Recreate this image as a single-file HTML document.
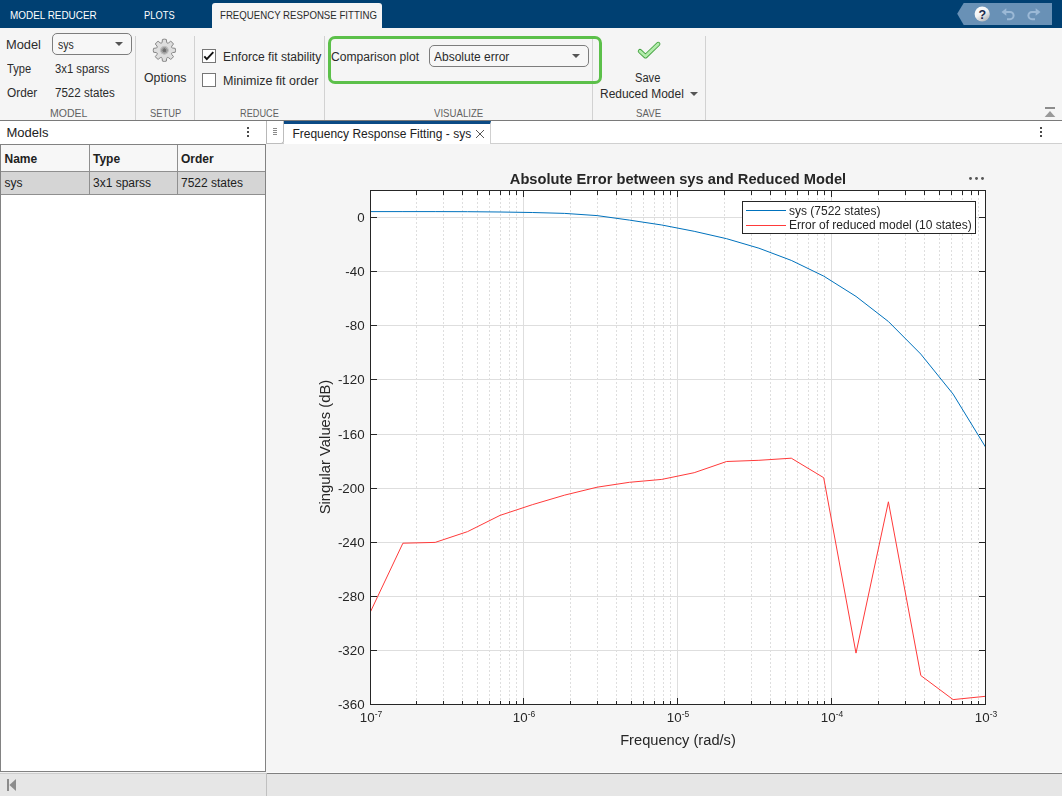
<!DOCTYPE html>
<html lang="en">
<head>
<meta charset="utf-8">
<title>Model Reducer - Frequency Response Fitting</title>
<style>
html,body{margin:0;padding:0;}
body{width:1062px;height:796px;overflow:hidden;background:#f5f5f5;font-family:"Liberation Sans",sans-serif;font-size:12px;color:#212121;position:relative;}
.abs{position:absolute;white-space:nowrap;}
#topbar{left:0;top:0;width:1062px;height:28px;background:#004072;}
.tab{color:#fff;font-size:11.5px;top:8px;line-height:14px;}
#acttab{left:212px;top:3px;width:170px;height:25px;background:#f5f5f5;border-radius:3px 3px 0 0;}
#strip{left:0;top:28px;width:1062px;height:92px;background:#f5f5f5;border-bottom:1px solid #7a7a7a;}
.sep{width:1px;top:36px;height:84px;background:#d2d2d2;}
.seclbl{top:106px;font-size:11px;line-height:14px;color:#616161;text-align:center;}
.t{font-size:12px;line-height:16px;color:#212121;}
.dd{border:1px solid #7d7d7d;border-radius:5px;background:#f7f7f7;box-sizing:border-box;}
.caret{width:0;height:0;border-left:4px solid transparent;border-right:4px solid transparent;border-top:4px solid #555;}
.th{font-size:12px;font-weight:bold;line-height:17px;color:#212121;}
.td{font-size:12px;line-height:17px;color:#212121;}
.x{line-height:16px;transform-origin:0 0;}
.cb{width:14px;height:14px;border:1px solid #767676;background:#fff;box-sizing:border-box;}
</style>
</head>
<body>
<!-- top bar -->
<div class="abs" id="topbar"></div>
<div class="abs" id="acttab"></div>
<!-- quick access -->
<svg class="abs" style="left:950px;top:0" width="112" height="28" viewBox="950 0 112 28">
<defs><linearGradient id="hg" x1="0" y1="0" x2="0.6" y2="1"><stop offset="0" stop-color="#ffffff"/><stop offset="0.55" stop-color="#f4f4f4"/><stop offset="1" stop-color="#b9bcc0"/></linearGradient></defs>
<path d="M963.7 3 H1052 V25 H963.7 L957.2 13.8 Z" fill="#6991b6"/>
<circle cx="982.2" cy="14" r="7.6" fill="url(#hg)"/>
<text x="982.2" y="18.6" font-family="Liberation Sans, sans-serif" font-weight="bold" font-size="12.5" text-anchor="middle" fill="#1b2a4d">?</text>
<g fill="none" stroke="#9bb9d6" stroke-width="2" stroke-linejoin="miter">
<path d="M1004.5 12 H1010 a3.6 3.6 0 0 1 0 7.2 H1007"/>
<path d="M1037.5 12 H1032 a3.6 3.6 0 0 0 0 7.2 H1035"/>
</g>
<g fill="#9bb9d6"><path d="M1001.5 12 L1006.3 8.2 V15.8 Z"/><path d="M1040.5 12 L1035.7 8.2 V15.8 Z"/></g>
</svg>
<!-- toolstrip -->
<div class="abs" id="strip"></div>
<div class="abs sep" style="left:135px"></div>
<div class="abs sep" style="left:194px"></div>
<div class="abs sep" style="left:324px"></div>
<div class="abs sep" style="left:592px"></div>
<div class="abs sep" style="left:705px"></div>
<!-- MODEL section -->
<div class="abs dd" style="left:52px;top:33px;width:80px;height:22px;"></div>
<div class="abs caret" style="left:115px;top:42px;"></div>
<!-- SETUP -->
<svg class="abs" style="left:151px;top:37px" width="27" height="27" viewBox="-13.5 -13.5 27 27">
<defs><radialGradient id="gc"><stop offset="0" stop-color="#6a6a6a"/><stop offset="0.38" stop-color="#757575"/><stop offset="0.46" stop-color="#9c9c9c"/><stop offset="0.68" stop-color="#a2a2a2"/><stop offset="0.76" stop-color="#bdbdbd"/><stop offset="0.95" stop-color="#c4c4c4"/><stop offset="1" stop-color="#d6d6d6"/></radialGradient></defs>
<g transform="translate(-0.1 -0.2)">
<path fill="#dedede" stroke="#878787" stroke-width="1" stroke-linejoin="round" d="M-2.27 -8.19L-1.97 -10.82Q0.00 -11.50 1.97 -10.82L2.27 -8.19A1.25 1.25 0 0 0 4.19 -7.40L6.26 -9.05Q8.13 -8.13 9.05 -6.26L7.40 -4.19A1.25 1.25 0 0 0 8.19 -2.27L10.82 -1.97Q11.50 0.00 10.82 1.97L8.19 2.27A1.25 1.25 0 0 0 7.40 4.19L9.05 6.26Q8.13 8.13 6.26 9.05L4.19 7.40A1.25 1.25 0 0 0 2.27 8.19L1.97 10.82Q0.00 11.50 -1.97 10.82L-2.27 8.19A1.25 1.25 0 0 0 -4.19 7.40L-6.26 9.05Q-8.13 8.13 -9.05 6.26L-7.40 4.19A1.25 1.25 0 0 0 -8.19 2.27L-10.82 1.97Q-11.50 0.00 -10.82 -1.97L-8.19 -2.27A1.25 1.25 0 0 0 -7.40 -4.19L-9.05 -6.26Q-8.13 -8.13 -6.26 -9.05L-4.19 -7.40A1.25 1.25 0 0 0 -2.27 -8.19Z"/>
<circle r="4.6" fill="url(#gc)"/>
</g>
</svg>
<!-- REDUCE -->
<div class="abs cb" style="left:202px;top:49px;"></div>
<svg class="abs" style="left:202px;top:49px" width="14" height="14" viewBox="202 49 14 14"><path d="M204.3 56.3 L206.8 59.1 L213.3 52.1" fill="none" stroke="#111" stroke-width="1.9"/></svg>
<div class="abs cb" style="left:202px;top:73px;"></div>
<!-- VISUALIZE -->
<div class="abs" style="left:328px;top:36px;width:274px;height:48px;border:3px solid #5cc04a;border-radius:7px;box-sizing:border-box;"></div>
<div class="abs dd" style="left:429px;top:45px;width:160px;height:22px;"></div>
<div class="abs caret" style="left:572px;top:54px;"></div>
<!-- SAVE -->
<svg class="abs" style="left:634px;top:38px" width="30" height="24" viewBox="634 38 30 24">
<path d="M640 51.2 L645.5 56.3 L658.2 44" fill="none" stroke="#3d9e3a" stroke-width="4.4" stroke-linecap="round" stroke-linejoin="round"/>
<path d="M640 51.2 L645.5 56.3 L658.2 44" fill="none" stroke="#b2ecab" stroke-width="2.7" stroke-linecap="round" stroke-linejoin="round"/>
</svg>
<div class="abs caret" style="left:690px;top:92px;"></div>
<!-- collapse icon -->
<svg class="abs" style="left:1043px;top:105px" width="14" height="14" viewBox="1043 105 14 14"><rect x="1045" y="107" width="10" height="2" fill="#8c8c8c"/><path d="M1050 111 L1055.3 117 H1044.7 Z" fill="#999"/></svg>

<div class="abs x" id="t1" style="left:10.16px;top:7px;font-size:10.5px;color:#fff;transform:scaleX(0.9441);">MODEL REDUCER</div>
<div class="abs x" id="t2" style="left:144.28px;top:7px;font-size:10.5px;color:#fff;transform:scaleX(0.8902);">PLOTS</div>
<div class="abs x" id="t3" style="left:220.20px;top:7px;font-size:10.5px;color:#2b2b2b;transform:scaleX(0.9192);">FREQUENCY RESPONSE FITTING</div>
<div class="abs x" id="m1" style="left:6.28px;top:37px;font-size:12px;color:#2b2b2b;transform:scaleX(1.0702);">Model</div>
<div class="abs x" id="m2" style="left:58.10px;top:37px;font-size:12px;color:#2b2b2b;transform:scaleX(0.8688);">sys</div>
<div class="abs x" id="m3" style="left:6.63px;top:61px;font-size:12px;color:#2b2b2b;transform:scaleX(0.9243);">Type</div>
<div class="abs x" id="m4" style="left:54.99px;top:61px;font-size:12px;color:#2b2b2b;transform:scaleX(0.9371);">3x1 sparss</div>
<div class="abs x" id="m5" style="left:6.50px;top:85px;font-size:12px;color:#2b2b2b;transform:scaleX(0.9873);">Order</div>
<div class="abs x" id="m6" style="left:54.99px;top:85px;font-size:12px;color:#2b2b2b;transform:scaleX(0.9645);">7522 states</div>
<div class="abs x" id="s1" style="left:49.66px;top:105.3px;font-size:10.5px;color:#616161;transform:scaleX(1.0005);">MODEL</div>
<div class="abs x" id="s2" style="left:149.84px;top:105.3px;font-size:10.5px;color:#616161;transform:scaleX(0.8897);">SETUP</div>
<div class="abs x" id="s3" style="left:240.31px;top:105.3px;font-size:10.5px;color:#616161;transform:scaleX(0.8742);">REDUCE</div>
<div class="abs x" id="s4" style="left:433.80px;top:105.3px;font-size:10.5px;color:#616161;transform:scaleX(0.9170);">VISUALIZE</div>
<div class="abs x" id="s5" style="left:635.90px;top:105.3px;font-size:10.5px;color:#616161;transform:scaleX(0.9209);">SAVE</div>
<div class="abs x" id="o1" style="left:143.67px;top:70px;font-size:12px;color:#2b2b2b;transform:scaleX(1.0269);">Options</div>
<div class="abs x" id="r1" style="left:223.33px;top:49px;font-size:12px;color:#2b2b2b;transform:scaleX(1.0095);">Enforce fit stability</div>
<div class="abs x" id="r2" style="left:223.30px;top:73px;font-size:12px;color:#2b2b2b;transform:scaleX(1.0432);">Minimize fit order</div>
<div class="abs x" id="v1" style="left:331.24px;top:49px;font-size:12px;color:#2b2b2b;transform:scaleX(1.0087);">Comparison plot</div>
<div class="abs x" id="v2" style="left:433.96px;top:49px;font-size:12px;color:#2b2b2b;transform:scaleX(0.9997);">Absolute error</div>
<div class="abs x" id="a1" style="left:635.20px;top:70px;font-size:12px;color:#2b2b2b;transform:scaleX(0.9261);">Save</div>
<div class="abs x" id="a2" style="left:599.90px;top:86px;font-size:12px;color:#2b2b2b;transform:scaleX(0.9969);">Reduced Model</div>
<!-- left panel -->
<div class="abs" style="left:0;top:121px;width:266px;height:23px;background:#fff;"></div>
<div class="abs" style="left:6.5px;top:123.5px;font-size:13px;line-height:17px;color:#212121;">Models</div>
<svg class="abs" style="left:244px;top:124px" width="8" height="16" viewBox="244 124 8 16"><g fill="#4a4a4a"><rect x="247" y="127" width="2" height="2"/><rect x="247" y="131" width="2" height="2"/><rect x="247" y="135" width="2" height="2"/></g></svg>
<div class="abs" style="left:266px;top:121px;width:1px;height:23px;background:#b8b8b8;"></div>
<div class="abs" style="left:0;top:144px;width:264px;height:626px;background:#fff;border:1px solid #828282;box-sizing:content-box;"></div>
<div class="abs" style="left:1px;top:145px;width:264px;height:26px;background:#f7f7f7;border-bottom:1px solid #8f8f8f;"></div>
<div class="abs" style="left:1px;top:172px;width:264px;height:22px;background:#d5d5d5;border-bottom:1px solid #8f8f8f;"></div>
<div class="abs" style="left:89px;top:145px;width:1px;height:50px;background:#8f8f8f;"></div>
<div class="abs" style="left:177px;top:145px;width:1px;height:50px;background:#8f8f8f;"></div>
<div class="abs th" style="left:4.5px;top:151.3px;">Name</div>
<div class="abs th" style="left:93px;top:151.3px;">Type</div>
<div class="abs th" style="left:181px;top:151.3px;">Order</div>
<div class="abs td" style="left:4.5px;top:175px;">sys</div>
<div class="abs td" style="left:93px;top:175px;">3x1 sparss</div>
<div class="abs td" style="left:181px;top:175px;">7522 states</div>
<!-- status bar -->
<div class="abs" style="left:0;top:772px;width:266px;height:1px;background:#f2f2f2;"></div>
<div class="abs" style="left:267px;top:772px;width:795px;height:1px;background:#fbfbfb;"></div>
<div class="abs" style="left:0;top:773px;width:1062px;height:23px;background:#e6e6e6;"></div>
<div class="abs" style="left:0;top:773px;width:266px;height:1px;background:#cdcdcd;"></div>
<div class="abs" style="left:267px;top:773px;width:795px;height:1px;background:#808080;"></div>
<div class="abs" style="left:266px;top:773px;width:1px;height:23px;background:#c0c0c0;"></div>
<svg class="abs" style="left:4px;top:776px" width="16" height="18" viewBox="4 776 16 18"><rect x="7" y="779" width="2" height="12" fill="#8c8c8c"/><path d="M16 779 V791 L9.4 785 Z" fill="#8c8c8c"/></svg>
<!-- doc tab bar -->
<div class="abs" style="left:267px;top:121px;width:795px;height:23px;background:#fff;border-bottom:1px solid #d0d0d0;box-sizing:border-box;"></div>
<div class="abs" style="left:267px;top:121px;width:17px;height:23px;background:#fff;border-right:1px solid #bdbdbd;border-bottom:1px solid #bdbdbd;border-radius:0 0 3px 0;box-sizing:border-box;"></div>
<svg class="abs" style="left:271px;top:127px" width="8" height="10" viewBox="0 0 8 10"><path d="M2 1.5H6M2 3.5H6M2 5.5H6M2 7.5H6" stroke="#8a8a8a" stroke-width="1" shape-rendering="crispEdges"/></svg>
<div class="abs" style="left:284px;top:121px;width:207px;height:23px;background:#fff;border-top:3px solid #0b4a85;border-right:1px solid #d0d0d0;box-sizing:border-box;"></div>
<div class="abs" style="left:292.4px;top:126px;font-size:12px;line-height:17px;color:#212121;">Frequency Response Fitting - sys</div>
<svg class="abs" style="left:475px;top:129px" width="10" height="10" viewBox="0 0 10 10"><path d="M1 1L9 9M9 1L1 9" stroke="#555" stroke-width="1"/></svg>
<svg class="abs" style="left:1037px;top:124px" width="8" height="16" viewBox="1037 124 8 16"><g fill="#4a4a4a"><rect x="1040" y="127" width="2" height="2"/><rect x="1040" y="131" width="2" height="2"/><rect x="1040" y="135" width="2" height="2"/></g></svg>

<svg class="abs" style="left:300px;top:160px;will-change:transform" width="740" height="600" viewBox="300 160 740 600" font-family="Liberation Sans, sans-serif">
<rect x="370.5" y="190.5" width="615.0" height="514.0" fill="#fff"/>
<path d="M416.5 190V705 M443.5 190V705 M462.5 190V705 M477.5 190V705 M489.5 190V705 M500.5 190V705 M509.5 190V705 M516.5 190V705 M570.5 190V705 M597.5 190V705 M616.5 190V705 M631.5 190V705 M643.5 190V705 M654.5 190V705 M663.5 190V705 M670.5 190V705 M724.5 190V705 M751.5 190V705 M770.5 190V705 M785.5 190V705 M797.5 190V705 M808.5 190V705 M817.5 190V705 M824.5 190V705 M878.5 190V705 M905.5 190V705 M924.5 190V705 M939.5 190V705 M951.5 190V705 M962.5 190V705 M971.5 190V705 M978.5 190V705" stroke="#dedede" stroke-width="1" stroke-dasharray="2 2" fill="none" shape-rendering="crispEdges"/>
<path d="M523.5 190.5V704.5 M677.5 190.5V704.5 M831.5 190.5V704.5 M370.5 217.5H985.5 M370.5 271.5H985.5 M370.5 325.5H985.5 M370.5 379.5H985.5 M370.5 434.5H985.5 M370.5 488.5H985.5 M370.5 542.5H985.5 M370.5 596.5H985.5 M370.5 650.5H985.5" stroke="#dedede" stroke-width="1" fill="none" shape-rendering="crispEdges"/>
<polyline points="370.5,211.6 402.9,211.6 435.2,211.6 467.6,211.7 500.0,212.0 532.3,212.5 564.7,213.4 597.1,215.6 629.4,220.1 661.8,225.0 694.2,231.3 726.6,238.7 758.9,248.2 791.3,260.4 823.7,276.1 856.0,296.4 888.4,321.5 920.8,354.1 953.1,394.1 985.5,447.0" fill="none" stroke="#0072bd" stroke-width="1" stroke-linejoin="round"/>
<polyline points="370.5,611.7 402.9,543.2 435.2,542.4 467.6,531.6 500.0,515.4 532.3,504.7 564.7,495.1 597.1,487.2 629.4,482.3 661.8,479.4 694.2,472.7 726.6,461.5 758.9,460.3 791.3,458.2 823.7,477.7 856.0,653.1 888.4,501.8 920.8,675.5 953.1,699.6 985.5,696.3" fill="none" stroke="#ff3a3a" stroke-width="1" stroke-linejoin="round"/>
<path d="M370.5 704.5v-6.5M370.5 190.5v6.5 M523.5 704.5v-6.5M523.5 190.5v6.5 M677.5 704.5v-6.5M677.5 190.5v6.5 M831.5 704.5v-6.5M831.5 190.5v6.5 M985.5 704.5v-6.5M985.5 190.5v6.5 M416.5 704.5v-4M416.5 190.5v4 M443.5 704.5v-4M443.5 190.5v4 M462.5 704.5v-4M462.5 190.5v4 M477.5 704.5v-4M477.5 190.5v4 M489.5 704.5v-4M489.5 190.5v4 M500.5 704.5v-4M500.5 190.5v4 M509.5 704.5v-4M509.5 190.5v4 M516.5 704.5v-4M516.5 190.5v4 M570.5 704.5v-4M570.5 190.5v4 M597.5 704.5v-4M597.5 190.5v4 M616.5 704.5v-4M616.5 190.5v4 M631.5 704.5v-4M631.5 190.5v4 M643.5 704.5v-4M643.5 190.5v4 M654.5 704.5v-4M654.5 190.5v4 M663.5 704.5v-4M663.5 190.5v4 M670.5 704.5v-4M670.5 190.5v4 M724.5 704.5v-4M724.5 190.5v4 M751.5 704.5v-4M751.5 190.5v4 M770.5 704.5v-4M770.5 190.5v4 M785.5 704.5v-4M785.5 190.5v4 M797.5 704.5v-4M797.5 190.5v4 M808.5 704.5v-4M808.5 190.5v4 M817.5 704.5v-4M817.5 190.5v4 M824.5 704.5v-4M824.5 190.5v4 M878.5 704.5v-4M878.5 190.5v4 M905.5 704.5v-4M905.5 190.5v4 M924.5 704.5v-4M924.5 190.5v4 M939.5 704.5v-4M939.5 190.5v4 M951.5 704.5v-4M951.5 190.5v4 M962.5 704.5v-4M962.5 190.5v4 M971.5 704.5v-4M971.5 190.5v4 M978.5 704.5v-4M978.5 190.5v4 M370.5 217.5h6.5M985.5 217.5h-6.5 M370.5 271.5h6.5M985.5 271.5h-6.5 M370.5 325.5h6.5M985.5 325.5h-6.5 M370.5 379.5h6.5M985.5 379.5h-6.5 M370.5 434.5h6.5M985.5 434.5h-6.5 M370.5 488.5h6.5M985.5 488.5h-6.5 M370.5 542.5h6.5M985.5 542.5h-6.5 M370.5 596.5h6.5M985.5 596.5h-6.5 M370.5 650.5h6.5M985.5 650.5h-6.5 M370.5 704.5h6.5M985.5 704.5h-6.5" stroke="#262626" stroke-width="1" fill="none" shape-rendering="crispEdges"/>
<rect x="370.5" y="190.5" width="615.0" height="514.0" fill="none" stroke="#262626" stroke-width="1" shape-rendering="crispEdges"/>
<text x="364.6" y="221.8" font-size="13.33" text-anchor="end" fill="#262626">0</text>
<text x="364.6" y="275.8" font-size="13.33" text-anchor="end" fill="#262626">-40</text>
<text x="364.6" y="329.8" font-size="13.33" text-anchor="end" fill="#262626">-80</text>
<text x="364.6" y="383.8" font-size="13.33" text-anchor="end" fill="#262626">-120</text>
<text x="364.6" y="438.8" font-size="13.33" text-anchor="end" fill="#262626">-160</text>
<text x="364.6" y="492.8" font-size="13.33" text-anchor="end" fill="#262626">-200</text>
<text x="364.6" y="546.8" font-size="13.33" text-anchor="end" fill="#262626">-240</text>
<text x="364.6" y="600.8" font-size="13.33" text-anchor="end" fill="#262626">-280</text>
<text x="364.6" y="654.8" font-size="13.33" text-anchor="end" fill="#262626">-320</text>
<text x="364.6" y="708.8" font-size="13.33" text-anchor="end" fill="#262626">-360</text>
<text x="371" y="721.7" font-size="13.33" text-anchor="middle" fill="#262626">10<tspan dy="-4.7" font-size="8.5">-7</tspan></text>
<text x="524" y="721.7" font-size="13.33" text-anchor="middle" fill="#262626">10<tspan dy="-4.7" font-size="8.5">-6</tspan></text>
<text x="678" y="721.7" font-size="13.33" text-anchor="middle" fill="#262626">10<tspan dy="-4.7" font-size="8.5">-5</tspan></text>
<text x="832" y="721.7" font-size="13.33" text-anchor="middle" fill="#262626">10<tspan dy="-4.7" font-size="8.5">-4</tspan></text>
<text x="986" y="721.7" font-size="13.33" text-anchor="middle" fill="#262626">10<tspan dy="-4.7" font-size="8.5">-3</tspan></text>
<text x="678" y="744.6" font-size="14.67" text-anchor="middle" fill="#262626">Frequency (rad/s)</text>
<text transform="translate(330 447) rotate(-90)" font-size="14.8" text-anchor="middle" fill="#262626">Singular Values (dB)</text>
<text x="678" y="184" font-size="14.67" font-weight="bold" text-anchor="middle" fill="#262626">Absolute Error between sys and Reduced Model</text>
<g fill="#555"><circle cx="970.5" cy="178.5" r="1.45"/><circle cx="976.5" cy="178.5" r="1.45"/><circle cx="982.5" cy="178.5" r="1.45"/></g>
<rect x="742.5" y="201.5" width="233" height="32" fill="#fff" stroke="#262626" stroke-width="1" shape-rendering="crispEdges"/>
<path d="M745.5 210.5H786" stroke="#0072bd" stroke-width="1" shape-rendering="crispEdges"/>
<path d="M745.5 225.5H786" stroke="#ff3a3a" stroke-width="1" shape-rendering="crispEdges"/>
<text x="789" y="214.6" font-size="12" fill="#262626">sys (7522 states)</text>
<text x="789" y="229" font-size="12" fill="#262626">Error of reduced model (10 states)</text>
</svg>
</body>
</html>
